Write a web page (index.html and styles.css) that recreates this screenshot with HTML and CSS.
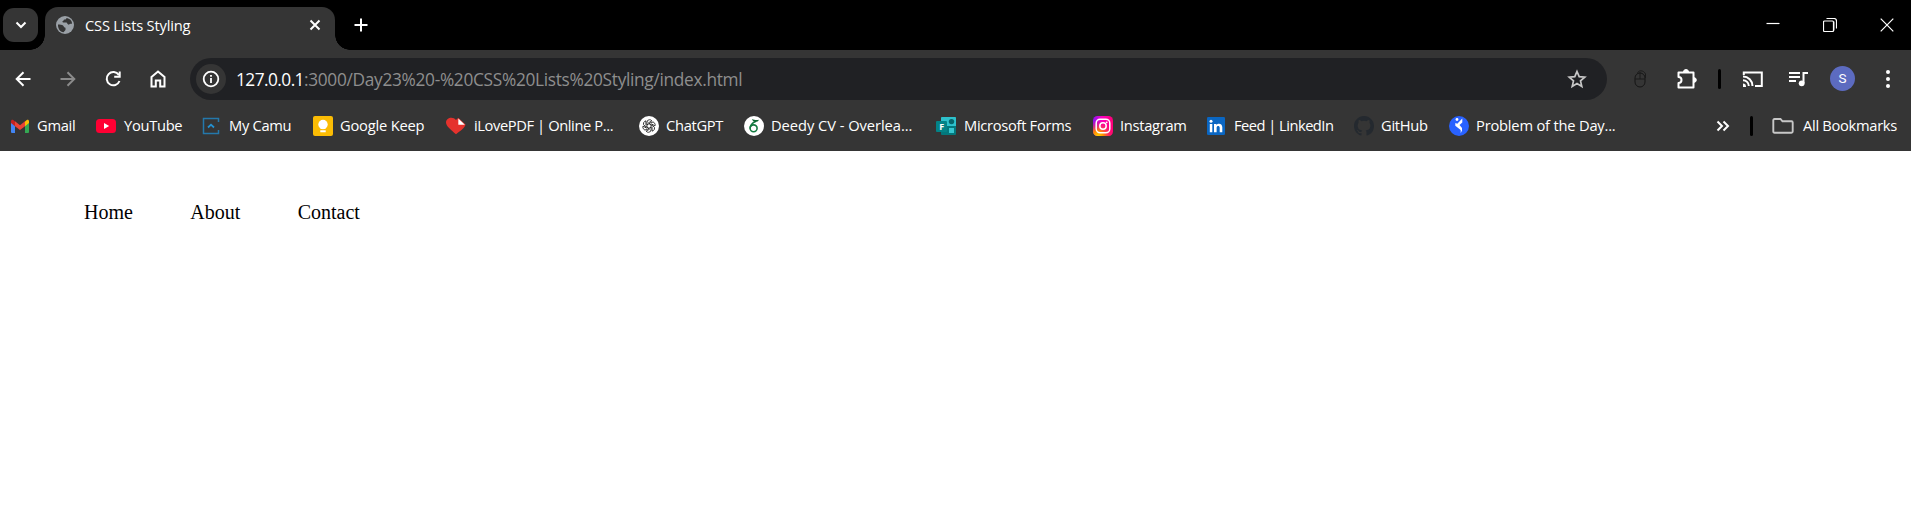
FILE: index.html
```html
<!DOCTYPE html>
<html lang="en">
<head>
<meta charset="utf-8">
<title>CSS Lists Styling</title>
<link rel="stylesheet" href="styles.css">
</head>
<body>
<header class="browser">
  <div class="tabstrip">
    <button class="tab-search" aria-label="Search tabs"><svg width="12" height="8" viewBox="0 0 12 8"><path d="M1.5 1.5 6 6l4.500-4.500" class="line w2"/></svg></button>
    <div class="tab">
      <svg class="globe" width="18" height="18" viewBox="0 0 18 18"><circle cx="9" cy="9" r="9" fill="#9aa0a6"/><path d="M2 8.500c2 0 4 0 5 1s1 2 2.500 2.300V14l-2 2.300C4 15.800 1.700 12.500 2 8.500zM10.500 2c-.3 1-.7 1.500-2 1.500-1 0-.6 1.300-1.600 1.600-.8.300-.5 1.400.3 1.500h3c1.200 0 1 1.700 2 2s1.300-.9 2.400-.9H16c.1-3-2.300-5.300-5.500-5.700z" fill="#353535"/></svg>
      <span class="tab-title">CSS Lists Styling</span>
      <svg class="tab-close" width="12" height="12" viewBox="0 0 12 12"><path d="m1.500 1.500 9 9m0-9-9 9" class="line w2"/></svg>
    </div>
    <svg class="new-tab" width="14" height="14" viewBox="0 0 14 14"><path d="M7 .5v13M.5 7h13" class="line w2"/></svg>
    <div class="window-controls">
      <svg width="14" height="14" viewBox="0 0 14 14"><path d="M.5 5.500h13" class="line w1"/></svg>
      <svg width="14" height="14" viewBox="0 0 14 14"><path d="M3.500.5H11Q13.500.5 13.500 3v7.500" class="line w1"/><path d="M11 3.500v9" stroke="#888" stroke-width="1.500"/><rect x=".5" y="3" width="10" height="10.500" rx="1" class="line w1"/></svg>
      <svg width="14" height="14" viewBox="0 0 14 14"><path d="m.7.700 12.600 12.600m0-12.600L.7 13.300" class="line w1"/></svg>
    </div>
  </div>
  <div class="toolbar">
    <div class="nav-buttons">
      <svg width="20" height="20" viewBox="0 0 20 20"><path d="M17.500 10H4m6.500-6.800L3.700 10l6.800 6.800" class="line w2"/></svg>
      <svg class="dim" width="20" height="20" viewBox="0 0 20 20"><path d="M2.500 10H16M9.500 3.200l6.800 6.800-6.800 6.800" class="line w2"/></svg>
      <svg width="20" height="20" viewBox="0 0 20 20"><path d="M15.800 6A6.600 6.600 0 1 0 16.500 12M16.700 2.500v5.300h-5.500" class="line w2"/></svg>
      <svg width="20" height="20" viewBox="0 0 20 20"><path d="M3.500 8 10 2.500 16.500 8v9.500h-4.300v-6H7.800v6H3.500z" class="line w2"/></svg>
    </div>
    <div class="omnibox">
      <span class="site-info"><svg width="18" height="18" viewBox="0 0 18 18"><circle cx="9" cy="9" r="7.300" class="line w18"/><path d="M9 8v5M9 5v1.800" class="line w18"/></svg></span>
      <span class="url"><b class="host">127.0.0.1</b><span class="path">:3000/Day23%20-%20CSS%20Lists%20Styling/index.html</span></span>
      <svg class="star" width="20" height="20" viewBox="0 0 20 20"><path d="m10 2.500 2.200 5.200 5.600.5-4.300 3.700 1.300 5.500-4.800-2.900-4.800 2.900 1.300-5.500-4.300-3.700 5.600-.5z" fill="none" stroke="#c7c7c7" stroke-width="1.700"/></svg>
    </div>
    <div class="actions">
      <svg class="a-mouse" width="14" height="18" viewBox="0 0 14 18"><rect x="1" y="3" width="10" height="14" rx="5" fill="none" stroke="#151515"/><path d="M1 9h10M6 2v7M3.500 4c0-4.500 6.500-4 8 0v4" fill="none" stroke="#1b1b1b"/></svg>
      <svg class="a-puzzle" width="22" height="22" viewBox="0 0 22 22"><path d="M2.500 4.500h15v15h-15V15a3 3 0 0 0 0-6z" class="line w2" stroke-linejoin="round"/><path d="M7.500 4a2.300 2.300 0 0 1 5 0zM18 9.700a2.300 2.300 0 0 1 0 4.600z" fill="#fff" stroke="#fff"/></svg>
      <i class="divider a-divider"></i>
      <svg class="a-cast" width="22" height="18" viewBox="0 0 22 18"><path d="M1.800 5V2.500h18V16H13M1 6.500A9.500 9.500 0 0 1 10.500 16M1 10.200A5.800 5.800 0 0 1 6.800 16" class="line w2"/><path d="M1 13.500A3 3 0 0 1 4 17H1z" fill="#fff"/></svg>
      <svg class="a-music" width="20" height="18" viewBox="0 0 20 18"><path d="M0 3h11M0 7h11M0 11h7M14.500 13V3H19" class="line w2"/><circle cx="12.700" cy="13.300" r="2.900" fill="#fff"/></svg>
      <span class="avatar">S</span>
      <svg class="a-menu" width="6" height="20" viewBox="0 0 6 20"><g fill="#fff"><circle cx="3" cy="3" r="2"/><circle cx="3" cy="10" r="2"/><circle cx="3" cy="17" r="2"/></g></svg>
    </div>
  </div>
  <nav class="bookmarks">
    <a class="bm gmail"><svg class="ico" viewBox="0 0 20 20"><path d="M1 5v11q0 1 1 1h3V8z" fill="#4285f4"/><path d="M19 5v11q0 1-1 1h-3V8z" fill="#34a853"/><path d="m15 5.500 1.500-1.300C17.800 3.300 19 4 19 5.500V7l-4 3.300z" fill="#fbbc04"/><path d="M5 5.500 3.500 4.200C2.200 3.300 1 4 1 5.500V7l4 3.300z" fill="#c5221f"/><path d="m5 5.300 5 3.900 5-3.900v5L10 14.100 5 10.300z" fill="#ea4335"/></svg><span>Gmail</span></a>
    <a class="bm youtube"><svg class="ico" viewBox="0 0 20 20"><rect y="3" width="20" height="14" rx="3.500" fill="#ff0033"/><path d="m8 7 5.200 3L8 13z" fill="#fff"/></svg><span>YouTube</span></a>
    <a class="bm camu"><svg class="ico" viewBox="0 0 20 20"><path d="M17.500 6V2.500h-15v15h15V14" fill="none" stroke="#2478ab" stroke-width="1.500"/><path d="M7 11.500 10 8.700l3 2.800" fill="none" stroke="#2490d0" stroke-width="1.800"/></svg><span>My Camu</span></a>
    <a class="bm keep"><svg class="ico" viewBox="0 0 20 20"><rect width="20" height="20" rx="2" fill="#fbbc04"/><circle cx="10" cy="8.500" r="4.700" fill="#fff"/><path d="M7.500 11h5v2h-5zM7.300 14.300h5.400v1.900H7.300z" fill="#fff"/></svg><span>Google Keep</span></a>
    <a class="bm pdf"><svg class="ico" viewBox="0 0 20 20"><path d="M10 18.200C5 14 0 10 0 6.500 0 1.500 7 0 10 4c.7-1 1.500-1.600 2.500-2L19.500 8.500C19 12 14 15 10 18.200z" fill="#e5322d"/><path d="M12.300 2.500v6.200h6.500z" fill="#fff"/></svg><span>iLovePDF | Online P...</span></a>
    <a class="bm chatgpt"><svg class="ico" viewBox="0 0 20 20"><circle cx="10" cy="10" r="10" fill="#fff"/><g fill="none" stroke="#222" stroke-width=".85"><path id="petal" d="M8 11.200V6.400q0-2.700 2.500-2.700 1.500 0 2.400 1.100L9.200 7"/><use href="#petal" transform="rotate(60 10 10)"/><use href="#petal" transform="rotate(120 10 10)"/><use href="#petal" transform="rotate(180 10 10)"/><use href="#petal" transform="rotate(240 10 10)"/><use href="#petal" transform="rotate(300 10 10)"/></g></svg><span>ChatGPT</span></a>
    <a class="bm overleaf"><svg class="ico" viewBox="0 0 20 20"><circle cx="10" cy="10" r="10" fill="#fff"/><ellipse cx="9.600" cy="12.300" rx="3.500" ry="3.400" fill="none" stroke="#137a40" stroke-width="1.600"/><path d="M6.100 12.500C6 9.500 8 7 12 5.200" fill="none" stroke="#137a40" stroke-width="1.500"/><path d="M8 3c2 .8 4 1.300 7 .8-.8 1.700-2.200 2.200-4 2.100C9.500 5.800 8.300 4.500 8 3z" fill="#0e6834"/></svg><span>Deedy CV - Overlea...</span></a>
    <a class="bm forms"><svg class="ico" viewBox="0 0 20 20"><rect x="5" y="1" width="15" height="18" rx="1" fill="#03787c"/><path d="M6 1h13q1 0 1 1v8H5V2q0-1 1-1z" fill="#2ec1cc"/><circle cx="15.500" cy="5.600" r="2.700" fill="#06666b"/><rect x="13" y="12" width="5" height="5" fill="#37c6d0"/><rect y="5" width="11" height="11" rx="1" fill="#038387"/><text x="5.500" y="13.800" text-anchor="middle" class="forms-letter">F</text></svg><span>Microsoft Forms</span></a>
    <a class="bm instagram"><svg class="ico" viewBox="0 0 20 20"><defs><linearGradient id="ig" x1="0" y1="0" x2="1" y2="0"><stop offset="0" stop-color="#8a13f4"/><stop offset=".45" stop-color="#fa00bf"/><stop offset="1" stop-color="#ff0074"/></linearGradient><radialGradient id="ig2" cx=".25" cy="1.050" r=".85"><stop offset="0" stop-color="#fd0"/><stop offset=".35" stop-color="#ff8a00"/><stop offset="1" stop-color="#ff0069" stop-opacity="0"/></radialGradient></defs><rect width="20" height="20" rx="4.500" fill="url(#ig)"/><rect width="20" height="20" rx="4.500" fill="url(#ig2)"/><g fill="none" stroke="#fff" stroke-width="1.500"><rect x="3.200" y="3.200" width="13.600" height="13.600" rx="4"/><circle cx="10" cy="10" r="3.200"/></g><circle cx="13.700" cy="6.300" r=".9" fill="#fff"/></svg><span>Instagram</span></a>
    <a class="bm linkedin"><svg class="ico" viewBox="0 0 20 20"><rect x="1" y="1" width="18" height="18" rx="1.200" fill="#0a66c2"/><path d="M3.800 8h2.500v8.300H3.800zM8 8h2.400v1.100C11.800 7 16.300 7.300 16.300 11.300v5h-2.600v-4.500c0-2.500-3.100-2.400-3.100 0v4.500H8z" fill="#fff"/><circle cx="5" cy="5.200" r="1.500" fill="#fff"/></svg><span>Feed | LinkedIn</span></a>
    <a class="bm github"><svg class="ico" viewBox="0 0 16 16"><path fill="#24292f" d="M8 0C3.580 0 0 3.580 0 8c0 3.540 2.290 6.530 5.470 7.590.4.070.55-.17.55-.38 0-.19-.01-.82-.01-1.490-2.010.37-2.530-.49-2.690-.94-.09-.23-.48-.94-.82-1.130-.28-.15-.68-.52-.01-.53.63-.01 1.080.58 1.230.82.72 1.210 1.870.87 2.330.66.07-.52.28-.87.51-1.070-1.780-.2-3.640-.89-3.640-3.950 0-.87.31-1.590.82-2.150-.08-.2-.36-1.020.08-2.120 0 0 .67-.21 2.200.82a7.600 7.600 0 0 1 4 0c1.530-1.040 2.200-.82 2.200-.82.44 1.100.16 1.920.08 2.120.51.56.82 1.270.82 2.150 0 3.070-1.870 3.750-3.650 3.950.29.25.54.73.54 1.480 0 1.070-.01 1.930-.01 2.200 0 .21.15.46.55.38A8.010 8.010 0 0 0 16 8c0-4.420-3.580-8-8-8z"/></svg><span>GitHub</span></a>
    <a class="bm problem"><svg class="ico" viewBox="0 0 20 20"><circle cx="10" cy="10" r="10" fill="#2962ff"/><circle cx="8" cy="3.500" r="1.400" fill="#fff"/><path d="M13.300 2.600v4L10.500 9 13 12v2.500l-1.300 2.700V14L6.300 9.800V6.900l2 .9z" fill="#fff"/></svg><span>Problem of the Day...</span></a>
    <div class="bm-end">
      <svg width="14" height="12" viewBox="0 0 14 12"><path d="m1.500 1.500 4.500 4.500-4.500 4.500m6-9L12 6l-4.500 4.500" class="line w2"/></svg>
      <i class="divider"></i>
      <svg class="folder" width="22" height="16" viewBox="0 0 22 16"><path d="M2.500 1h6l2 2.300h9q1.200 0 1.200 1.200v9q0 1.200-1.200 1.200h-17q-1.200 0-1.200-1.200V2.200Q1.300 1 2.500 1z" fill="none" stroke="#c7c7c7" stroke-width="1.900"/></svg>
      <span class="all">All Bookmarks</span>
    </div>
  </nav>
</header>
<main>
  <ul class="menu"><li>Home</li><li>About</li><li>Contact</li></ul>
</main>
</body>
</html>
```
FILE: styles.css
```css
* { box-sizing: border-box; }
body { margin: 0; background: #fff; overflow: hidden; }
svg { display: block; flex: none; }
.line { fill: none; stroke: #fff; }
.w1 { stroke-width: 1.2; }
.w18 { stroke-width: 1.8; }
.w2 { stroke-width: 2; }
.browser { height: 151px; background: #353535; color: #fff; font-family: "Open Sans", "Noto Sans", sans-serif; font-size: 14.7px; line-height: 20px; white-space: nowrap; }

.tabstrip { height: 50px; background: #000; display: flex; padding-left: 3px; }
.tab-search { width: 35px; height: 34px; margin-top: 8px; padding: 0; border: 0; border-radius: 11px; background: #353535; display: flex; align-items: center; justify-content: center; }
.tab { position: relative; width: 290px; height: 43px; margin: 7px 0 0 7px; padding: 0 14px 7px 11px; border-radius: 13px 13px 0 0; background: #353535; display: flex; align-items: center; }
.tab::before, .tab::after { content: ""; position: absolute; bottom: 0; width: 15px; height: 15px; }
.tab::before { left: -15px; background: radial-gradient(circle at 0 0, #0000 14.5px, #353535 15px); }
.tab::after { right: -15px; background: radial-gradient(circle at 100% 0, #0000 14.5px, #353535 15px); }
.tab-title { margin-left: 11px; letter-spacing: -.2px; }
.tab-close { margin-left: auto; }
.new-tab { margin: 18px 0 0 19px; }
.window-controls { margin: 18px 17px 0 auto; display: flex; gap: 43px; }

.toolbar { height: 50px; display: flex; align-items: center; padding: 8px 20px 0 13px; }
.nav-buttons { display: flex; gap: 25px; width: 177px; padding-bottom: 1px; }
.omnibox { width: 1417px; height: 42px; border-radius: 21px; background: #202124; display: flex; align-items: center; padding: 0 20px 0 6px; flex: none; }
.dim { opacity: .42; }
.site-info { width: 30px; height: 30px; border-radius: 50%; background: #353535; display: flex; align-items: center; justify-content: center; }
.url { margin-left: 10px; font-size: 17.3px; line-height: 24px; padding-top: 2px; }
.host { font-weight: 400; letter-spacing: -.55px; }
.path { color: #8e8e8e; letter-spacing: -.31px; }
.star { margin-left: auto; }
.actions { flex: 1; display: flex; align-items: center; padding-bottom: 1px; }
.a-mouse { margin-left: 27px; }
.a-puzzle { margin-left: 28px; }
.divider { width: 3px; height: 20px; border-radius: 1.5px; background: #000; }
.a-divider { margin-left: 20px; }
.a-cast { margin-left: 21px; }
.a-music { margin-left: 25px; }
.avatar { margin-left: 21px; width: 25px; height: 25px; border-radius: 50%; background: #5c6bc0; font: 13.5px/25px Roboto, sans-serif; text-align: center; }
.a-menu { margin-left: 30px; }

.bookmarks { height: 51px; display: flex; align-items: center; padding: 0 14px 0 10px; }
.bm { display: flex; align-items: center; gap: 7px; flex: none; letter-spacing: -.3px; }
.bm span, .all { padding-bottom: 2px; }
.ico { width: 20px; height: 20px; }
.forms-letter { font: bold 9px "Open Sans", sans-serif; fill: #fff; }
.gmail { width: 86px; }
.youtube { width: 105px; gap: 8px; }
.camu { width: 112px; gap: 8px; }
.keep { width: 133px; letter-spacing: -.2px; }
.pdf { width: 193px; gap: 8px; letter-spacing: -.4px; }
.chatgpt { width: 105px; }
.overleaf { width: 192px; letter-spacing: -.05px; }
.forms { width: 157px; gap: 8px; letter-spacing: -.3px; }
.instagram { width: 113px; }
.linkedin { width: 148px; gap: 8px; letter-spacing: -.52px; }
.github { width: 95px; }
.problem { letter-spacing: -.2px; }
.bm-end { margin-left: auto; display: flex; align-items: center; }
.bm-end .divider { margin-left: 20px; }
.folder { margin-left: 19px; }
.all { width: 94px; margin-left: 9px; letter-spacing: -.3px; }

.menu { margin: 0; padding: 49px 0 0 84px; display: flex; gap: 57.4px; list-style: none; font: 20px/24px "Liberation Serif", serif; color: #000; }
```
